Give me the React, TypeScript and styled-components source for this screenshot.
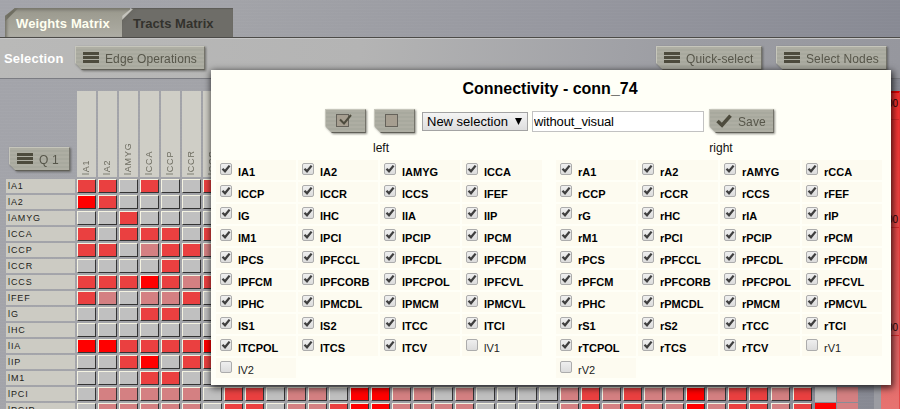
import React from 'react';
import styled, { createGlobalStyle } from 'styled-components';

const Global = createGlobalStyle`
  * { box-sizing: border-box; }
  body { margin: 0; font-family: "Liberation Sans", Arial, sans-serif; }
`;

const Page = styled.div`
  position: relative;
  width: 900px;
  height: 409px;
  overflow: hidden;
  display: flex;
  flex-direction: column;
  background:
    repeating-linear-gradient(0deg, rgba(255, 255, 255, 0.02) 0 1px, transparent 1px 3px),
    linear-gradient(97deg, #a3a4aa 0%, #a2a3a8 25%, #96979f 60%, #868892 100%);
`;

const TabBar = styled.nav`
  display: flex;
  flex: none;
  height: 38px;
  padding: 8px 0 0 5px;
  border-bottom: 1px solid #4c4b48;
`;

const Tab = styled.div<{ $active?: boolean }>`
  height: 29px;
  width: ${p => (p.$active ? 125 : 111)}px;
  margin-left: ${p => (p.$active ? 0 : -8)}px;
  padding-left: 11px;
  line-height: 31px;
  font-size: 13px;
  font-weight: bold;
  letter-spacing: ${p => (p.$active ? 0.12 : 0.03)}px;
  white-space: nowrap;
  color: ${p => (p.$active ? '#fffff0' : '#33322d')};
  background: ${p =>
    p.$active
      ? 'linear-gradient(135deg, #6f6e61 0 9px, transparent 10px), linear-gradient(#99988c, #aeada4)'
      : 'linear-gradient(135deg, #c4c3bc 0 8px, #6a6963 9px, #6e6d68 14px)'};
  box-shadow: ${p => (p.$active ? 'inset 2px 2px 3px #77766b' : 'inset 0 1px 1px #5c5b57')};
  clip-path: polygon(0 8px, 10px 0, 100% 0, 100% 100%, 0 100%);
`;

const Toolbar = styled.header`
  display: flex;
  flex: none;
  align-items: center;
  height: 41px;
  padding: 0 13px 1px 4px;
  background: linear-gradient(97deg, #b9b9b8, #b4b4b4 40%, #9c9da3 75%, #96979e);
  border-top: 1px solid #c6c6c6;
  border-bottom: 1px solid #7b7c82;
`;

const ToolbarTitle = styled.span`
  width: 71px;
  font-size: 13px;
  font-weight: bold;
  color: #fff;
  letter-spacing: 0.2px;
`;

const ToolbarGap = styled.div`
  flex: 1;
`;

const ButtonShadow = styled.div<{ $gap?: number }>`
  flex: none;
  margin-left: ${p => p.$gap ?? 0}px;
  filter: drop-shadow(1px 1px 1px rgba(60, 60, 55, 0.6));
`;

const ButtonFace = styled.button<{ $w: number; $pad?: number }>`
  display: flex;
  align-items: center;
  gap: 6px;
  width: ${p => p.$w}px;
  height: 24px;
  padding: 1px 0 0 ${p => p.$pad ?? 7}px;
  border: 1px solid #c6c6bb;
  border-right-color: #74736a;
  border-bottom-color: #605f57;
  background: repeating-linear-gradient(#aeaea3 0 2px, #a8a99e 2px 4px);
  color: #57564a;
  font: 12px "Liberation Sans", Arial, sans-serif;
  letter-spacing: 0.12px;
  white-space: nowrap;
  clip-path: polygon(0 0, 100% 0, 100% 100%, 7px 100%, 0 17px);

  svg {
    margin-top: -2px;
  }
`;

const MenuIcon = () => (
  <svg width="16" height="11" viewBox="0 0 16 11" fill="#4d4b3d">
    <rect width="16" height="3" />
    <rect y="4" width="16" height="3" />
    <rect y="8" width="16" height="3" />
  </svg>
);

const TickIcon = () => (
  <svg width="16" height="14" viewBox="0 0 16 14" fill="none" stroke="#4d4b3d" strokeWidth="3.6">
    <path d="M1.5 7 L6 11.2 L14.5 1.6" />
  </svg>
);

const BoxIcon = ({ ticked }: { ticked?: boolean }) => (
  <svg width="16" height="15" viewBox="0 0 16 15" fill="none">
    <rect x="0.5" y="1.5" width="12" height="12" fill="#a69e90" stroke="#65625a" />
    {ticked && <path d="M4 6.5 L8 10.5 L15 2" stroke="#4d4b3d" strokeWidth="2" />}
  </svg>
);

const Button = ({ width, gap, pad, children }: { width: number; gap?: number; pad?: number; children: React.ReactNode }) => (
  <ButtonShadow $gap={gap}>
    <ButtonFace $w={width} $pad={pad}>{children}</ButtonFace>
  </ButtonShadow>
);

const Workspace = styled.main`
  display: flex;
  flex: none;
  padding: 12px 0 0 6px;
`;

const Matrix = styled.div`
  display: flex;
  flex: none;
  flex-direction: column;
  width: 868px;
`;

const HeaderRow = styled.div`
  display: flex;
  height: 88px;
`;

const Corner = styled.div`
  width: 71px;
  padding: 56px 0 0 3px;
`;

const ColumnHead = styled.div`
  flex: none;
  width: 19px;
  height: 86px;
  margin-right: 2px;
  padding-top: 2px;
  background: #cfcec6;
  writing-mode: vertical-rl;
  transform: rotate(180deg);
  font: 9px/19px "Liberation Sans", Arial, sans-serif;
  letter-spacing: 0.8px;
  color: #6d6c60;
`;

const MatrixRow = styled.div`
  display: flex;
  height: 16px;
`;

const RowHead = styled.div`
  flex: none;
  width: 69px;
  height: 14px;
  margin-right: 2px;
  padding-left: 2px;
  background: #cccbc3;
  font: 9px/14px "Liberation Sans", Arial, sans-serif;
  letter-spacing: 0.9px;
  color: #1d1c18;
`;

const levels = ['#c0c0c0', '#d48082', '#ea4040', '#ff0000'];

const Cell = styled.div<{ $level: number; $wide?: boolean; $flat?: boolean }>`
  flex: none;
  width: ${p => (p.$flat ? 21 : 19)}px;
  height: ${p => (p.$flat ? 15 : 14)}px;
  margin-right: ${p => (p.$flat ? 1 : p.$wide ? 3 : 2)}px;
  background: ${p => levels[p.$level]};
  border: ${p => (p.$flat ? 0 : 1)}px solid #f4f3e2;
  border-right-color: #333;
  border-bottom-color: #333;
`;

const LegendTrack = styled.aside`
  width: 26px;
  height: 330px;
  padding-left: 7px;
  background: linear-gradient(90deg, #9b9ca2 7px, transparent 7px);
`;

const Legend = styled.div`
  display: flex;
  flex-direction: column;
  height: 330px;
  border-top: 2px solid #e00000;
  border-right: 1px solid rgba(225, 50, 50, 0.6);
  background: linear-gradient(#f8302e 0%, #ee4543 35%, #e26262 75%, #e77673 100%);
`;

const LegendMark = styled.div<{ $h: number }>`
  display: flex;
  align-items: flex-end;
  justify-content: flex-end;
  flex: none;
  height: ${p => p.$h}px;
  padding: 0 1px ${p => (p.$h < 40 ? 9 : 1)}px 0;
  border-bottom: 1px solid #d62a2a;
  font-size: 10px;
  line-height: 12px;
  color: #250505;
`;

const Dialog = styled.section`
  position: absolute;
  left: 211px;
  top: 70px;
  width: 680px;
  height: 315px;
  display: flex;
  flex-direction: column;
  background: #fffff7;
  box-shadow: 1px 2px 7px 1px rgba(0, 0, 0, 0.75);
`;

const DialogTitle = styled.h1`
  margin: 9px 2px 0 0;
  height: 20px;
  line-height: 20px;
  font-size: 16px;
  text-align: center;
  color: #000;
`;

const Controls = styled.div`
  display: flex;
  align-items: center;
  height: 24px;
  margin: 10px 0 0 114px;
`;

const Dropdown = styled.div`
  display: flex;
  align-items: center;
  justify-content: space-between;
  width: 106px;
  height: 19px;
  margin-left: 7px;
  padding: 0 5px 0 4px;
  border: 1px solid #a3a3a3;
  background: linear-gradient(#f4f4f4, #dedede);
  font-size: 13px;
  color: #000;
`;

const NameInput = styled.input`
  width: 172px;
  height: 21px;
  margin: 0 0 0 4px;
  padding: 0 1px;
  border: 1px solid #c2c2c2;
  background: #fff;
  font: 13px "Liberation Sans", Arial, sans-serif;
  letter-spacing: -0.13px;
  color: #000;
`;

const Sides = styled.div`
  display: flex;
  gap: 12px;
  margin: 7px 0 0 5px;
`;

const Side = styled.div`
  width: 328px;
`;

const SideName = styled.div`
  height: 20px;
  padding: 1px 0 0 2px;
  line-height: 14px;
  font-size: 12px;
  text-align: center;
  color: #111;
`;

const NodeGrid = styled.div`
  display: grid;
  grid-template-columns: repeat(4, 80px);
  grid-auto-rows: 20px;
  gap: 2px;
`;

const Node = styled.label<{ $on: boolean }>`
  display: flex;
  padding-left: 4px;
  background: #fdfbf0;
  font-size: 11px;
  font-weight: ${p => (p.$on ? 'bold' : 'normal')};
  line-height: 24px;
  color: ${p => (p.$on ? '#000' : '#222')};
`;

const CheckFace = styled.span`
  flex: none;
  width: 12px;
  height: 12px;
  margin: 3px 6px 0 0;
  border: 1px solid #acacac;
  border-radius: 2px;
  background: linear-gradient(#efefef, #dcdcdc);
  display: flex;
`;

const Check = ({ on }: { on: boolean }) => (
  <CheckFace>
    {on && (
      <svg width="10" height="10" viewBox="0 0 10 10" fill="none" stroke="#3f3f3f" strokeWidth="2.3">
        <path d="M1.5 4.8 L4 7.3 L8.6 1.6" />
      </svg>
    )}
  </CheckFace>
);

const nodeNames = [
  'A1', 'A2', 'AMYG', 'CCA', 'CCP', 'CCR', 'CCS', 'FEF', 'G', 'HC', 'IA', 'IP', 'M1', 'PCI', 'PCIP', 'PCM',
  'PCS', 'PFCCL', 'PFCDL', 'PFCDM', 'PFCM', 'PFCORB', 'PFCPOL', 'PFCVL', 'PHC', 'PMCDL', 'PMCM', 'PMCVL',
  'S1', 'S2', 'TCC', 'TCI', 'TCPOL', 'TCS', 'TCV', 'V1', 'V2',
];

const weights = [
  '2202002', '3200000', '0020000', '2022202', '2201221', '0000200', '2223212', '2101120', '0002200',
  '0000000', '3322223', '0023022', '0002200',
  '0111110' + '2201103311010000' + '121211312212' + '01',
  '0111110' + '2201123311110000' + '121211312212' + '31',
];

const NodeSide = ({ name, prefix }: { name: string; prefix: string }) => (
  <Side>
    <SideName>{name}</SideName>
    <NodeGrid>
      {nodeNames.map(n => {
        const on = n !== 'V1' && n !== 'V2';
        return (
          <Node key={n} $on={on}>
            <Check on={on} />
            {prefix + n}
          </Node>
        );
      })}
    </NodeGrid>
  </Side>
);

export default function App() {
  return (
    <>
      <Global />
      <Page>
        <TabBar>
          <Tab $active>Weights Matrix</Tab>
          <Tab>Tracts Matrix</Tab>
        </TabBar>
        <Toolbar>
          <ToolbarTitle>Selection</ToolbarTitle>
          <Button width={130}><MenuIcon />Edge Operations</Button>
          <ToolbarGap />
          <Button width={106}><MenuIcon />Quick-select</Button>
          <Button width={111} gap={14}><MenuIcon />Select Nodes</Button>
        </Toolbar>
        <Workspace>
          <Matrix>
            <HeaderRow>
              <Corner>
                <Button width={61}><MenuIcon />Q 1</Button>
              </Corner>
              {nodeNames.slice(0, 7).map(n => (
                <ColumnHead key={n}>{'l' + n}</ColumnHead>
              ))}
            </HeaderRow>
            {weights.map((row, i) => (
              <MatrixRow key={i}>
                <RowHead>{'l' + nodeNames[i]}</RowHead>
                {row.split('').map((v, j) => (
                  <Cell key={j} $level={Number(v)} $wide={j > 31} $flat={j > 34} />
                ))}
              </MatrixRow>
            ))}
          </Matrix>
          <LegendTrack>
            <Legend>
              <LegendMark $h={27}>00</LegendMark>
              <LegendMark $h={108}>00</LegendMark>
              <LegendMark $h={108}>00</LegendMark>
            </Legend>
          </LegendTrack>
        </Workspace>
        <Dialog>
          <DialogTitle>Connectivity - conn_74</DialogTitle>
          <Controls>
            <Button width={41} pad={10}><BoxIcon ticked /></Button>
            <Button width={41} gap={8} pad={10}><BoxIcon /></Button>
            <Dropdown>
              New selection
              <svg width="7" height="7" viewBox="0 0 7 7"><path d="M0 0H7L3.5 7Z" fill="#000" /></svg>
            </Dropdown>
            <NameInput defaultValue="without_visual" />
            <Button width={65} gap={5} pad={6}><TickIcon />Save</Button>
          </Controls>
          <Sides>
            <NodeSide name="left" prefix="l" />
            <NodeSide name="right" prefix="r" />
          </Sides>
        </Dialog>
      </Page>
    </>
  );
}
